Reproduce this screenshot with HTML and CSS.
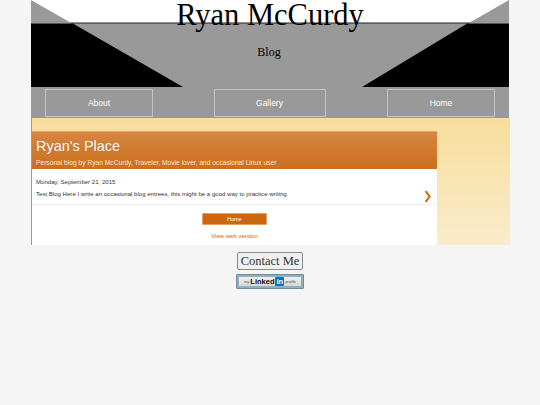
FILE: index.html
```html
<!DOCTYPE html>
<html lang="en">
<head>
<meta charset="utf-8">
<title>Ryan McCurdy</title>
<link rel="stylesheet" href="styles.css">
</head>
<body>
<div class="page">
  <header class="hero">
    <svg class="hero-art" viewBox="0 0 478 87" preserveAspectRatio="none" aria-hidden="true">
      <rect width="478" height="87" fill="#000"/>
      <rect width="478" height="23" fill="#fff"/>
      <polygon points="41,23 437,23 331,87 152,87" fill="#999"/>
      <rect y="22.5" width="478" height="1" fill="#222"/>
      <polygon points="0,0 41,23.5 0,23.5" fill="#999"/>
      <polygon points="478,0 437,23.5 478,23.5" fill="#999"/>
    </svg>
    <h1 class="title">Ryan McCurdy</h1>
    <p class="subtitle">Blog</p>
  </header>
  <nav class="nav">
    <a class="nav-btn nav-about">About</a>
    <a class="nav-btn nav-gallery">Gallery</a>
    <a class="nav-btn nav-home">Home</a>
  </nav>
  <section class="frame">
    <div class="blog">
      <div class="blog-head">
        <h2 class="blog-title">Ryan's Place</h2>
        <p class="blog-desc">Personal blog by Ryan McCurdy, Traveler, Movie lover, and occasional Linux user</p>
      </div>
      <div class="post">
        <div class="post-text">
          <div class="post-date">Monday, September 21, 2015</div>
          <div class="post-body">Test Blog Here I write an occasional blog entrees, this might be a good way to practice writing.</div>
        </div>
        <svg class="chevron" viewBox="0 0 8 13" aria-hidden="true"><path d="M1.6 1.2 L5.6 6.5 L1.6 11.8" fill="none" stroke="#cc6611" stroke-width="2"/></svg>
      </div>
      <div class="blog-foot">
        <a class="home-btn">Home</a>
        <a class="web-link">View web version</a>
      </div>
    </div>
  </section>
  <div class="actions">
    <button class="contact" type="button">Contact Me</button>
    <div class="badge"><div class="badge-in"><span class="b-my">my</span><span class="b-linked">Linked</span><span class="b-in">in</span><span class="b-my">profile</span></div></div>
  </div>
</div>
</body>
</html>
```
FILE: styles.css
```css
html, body { margin: 0; padding: 0; }
body { background: #f5f5f5; font-family: "Liberation Sans", Arial, sans-serif; min-height: 405px; }
.page { width: 478px; margin: 0 auto; }

.hero { position: relative; height: 87px; text-align: center; font-family: "Liberation Serif", serif; color: #000; }
.hero-art { position: absolute; left: 0; top: 0; width: 478px; height: 87px; display: block; }
.title { position: relative; margin: 0; height: 43px; padding-top: 2px; font-size: 30.5px; font-weight: 400; line-height: 26px; }
.subtitle { position: relative; margin: 0; padding-right: 2px; font-size: 12px; line-height: 15px; }

.nav { height: 31px; box-sizing: border-box; background: #999; padding: 2px 14px 1px; display: flex; justify-content: space-between; }
.nav-btn { box-sizing: border-box; width: 108px; height: 28px; border: 1px solid #c4c4c4; color: #fff; font-size: 8.5px; display: flex; align-items: center; justify-content: center; }
.nav-gallery { width: 112px; margin-left: -1px; }

.frame { width: 479px; height: 127px; box-sizing: border-box; padding-top: 13px; background: linear-gradient(#f8dd9c, #faeccb); border-left: 1px solid #999; }
.blog { width: 405px; height: 114px; background: #fff; display: flex; flex-direction: column; }
.blog-head { height: 38px; box-sizing: border-box; padding: 5px 4px 0; color: #fff; background: linear-gradient(#d68640, #cc6f1e); border-top: 1px solid #e9a763; }
.blog-title { margin: 0; font-size: 14.5px; font-weight: 400; line-height: 18px; text-shadow: 0 0 1px rgba(120,60,10,.4); }
.blog-desc { margin: 3px 0 0; font-size: 6.67px; line-height: 9px; color: #fbe6cf; }
.post { height: 36px; box-sizing: border-box; padding: 9px 5px 0 4px; border-bottom: 1px solid #eee; display: flex; justify-content: space-between; color: #333; font-size: 6.07px; }
.post-date { line-height: 8px; }
.post-body { margin-top: 3.5px; line-height: 8px; }
.chevron { width: 8px; height: 13px; margin-top: 12px; }
.blog-foot { display: flex; flex-direction: column; align-items: center; padding-top: 8px; }
.home-btn { width: 65px; height: 12px; box-sizing: border-box; background: #cc6611; color: #fff; font-size: 5.5px; display: flex; align-items: center; justify-content: center; border: 1px solid #e0a060; border-radius: 1px; }
.web-link { margin-top: 7px; color: #cc6611; font-size: 6px; line-height: 9px; }

.actions { display: flex; flex-direction: column; align-items: center; padding-top: 7px; }
.contact { box-sizing: border-box; width: 66px; height: 18px; padding: 0; font-family: "Liberation Serif", serif; font-size: 12.5px; line-height: 14px; white-space: nowrap; color: #333; background: #f0f0f0; border: 1px solid #8a8a8a; border-radius: 2px; }
.badge { box-sizing: border-box; width: 68px; height: 15px; margin-top: 4px; padding: 2px; background: #8fb0bf; border: 1px solid #6f8f9f; border-radius: 1px; }
.badge-in { height: 100%; background: linear-gradient(#f0f0f0, #d8d8d8); display: flex; align-items: center; justify-content: center; gap: 1px; color: #333; white-space: nowrap; }
.b-my { font-size: 4px; color: #555; }
.b-linked { font-size: 7.5px; font-weight: 700; color: #111; }
.b-in { font-size: 7.5px; font-weight: 700; color: #fff; background: #0077b5; padding: 0 1px; line-height: 9px; border-radius: 1px; }
```
